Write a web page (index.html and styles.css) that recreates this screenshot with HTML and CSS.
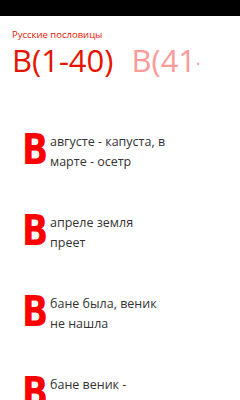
FILE: index.html
```html
<!DOCTYPE html>
<html lang="ru">
<head>
<meta charset="utf-8">
<link rel="stylesheet" href="styles.css">
</head>
<body>
<div class="statusbar"></div>
<div class="app">
  <div class="app-title">Русские пословицы</div>
  <div class="pivot">
    <span class="pivot-item active">В(1-40)</span>
    <span class="pivot-item">В(41-80)</span>
  </div>
  <ul class="list">
    <li class="row"><span class="cap">В</span><span class="text">августе - капуста, в<br>марте - осетр</span></li>
    <li class="row"><span class="cap">В</span><span class="text">апреле земля<br>преет</span></li>
    <li class="row"><span class="cap">В</span><span class="text">бане была, веник<br>не нашла</span></li>
    <li class="row"><span class="cap">В</span><span class="text">бане веник -<br>дороже денег</span></li>
  </ul>
</div>
</body>
</html>
```
FILE: styles.css
```css
html, body {
  margin: 0;
  padding: 0;
  background: #fff;
  width: 240px;
  height: 400px;
  overflow: hidden;
}
.statusbar {
  height: 16px;
  background: #000;
}
.app {
  font-family: "Open Sans", "Noto Sans", sans-serif;
}
.app-title {
  color: #e51400;
  font-size: 9.5px;
  line-height: 12px;
  margin: 13px 0 0 12px;
}
.pivot {
  display: flex;
  gap: 18px;
  margin: 1px 0 0 12px;
  width: 187px;
  overflow: hidden;
  white-space: nowrap;
}
.pivot-item {
  font-size: 31px;
  line-height: 36px;
  color: #ff9a9a;
  font-weight: 400;
}
.pivot-item.active {
  color: #e51400;
}
.list {
  list-style: none;
  margin: 50px 0 0 0;
  padding: 0;
}
.row {
  display: flex;
  align-items: flex-start;
  height: 81px;
  padding-left: 22px;
}
.cap {
  font-family: "DejaVu Sans", sans-serif;
  font-weight: 700;
  color: #ff0000;
  font-size: 43px;
  line-height: 43px;
  display: inline-block;
  width: 28px;
  flex: none;
  transform: scaleX(0.8);
  transform-origin: left top;
}
.text {
  color: #333;
  font-size: 12.5px;
  line-height: 20px;
  white-space: nowrap;
  padding-top: 4px;
}
```
